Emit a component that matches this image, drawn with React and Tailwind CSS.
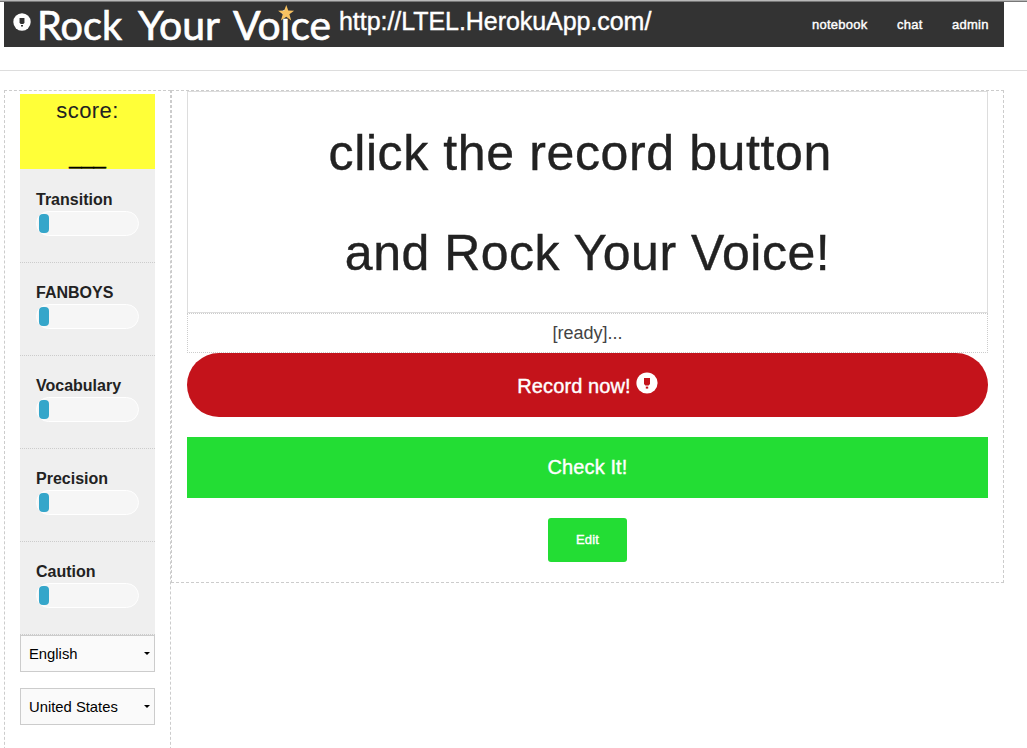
import React, { useState } from "react";

const NAV_LINKS = [
  { label: "notebook", className: "w-[56px]" },
  { label: "chat", className: "w-[26px]" },
  { label: "admin", className: "w-[37px]" },
];

const METERS = ["Transition", "FANBOYS", "Vocabulary", "Precision", "Caution"];

function RecordIcon({ className, hole }) {
  return (
    <svg viewBox="0 0 22 22" className={className}>
      <circle cx="11" cy="11" r="10.6" fill="#fff" />
      <path d="M8 6h6v6l-1.4 1.4H9.4L8 12z" fill={hole} />
      <path d="M9.8 14.6h2.4v2H9.8z" fill={hole} />
    </svg>
  );
}

function Logo() {
  return (
    <svg
      viewBox="0 -4 300 54"
      className="-mr-1 -mt-1 h-[54px] w-[300px] shrink-0"
      fontFamily="Lato, sans-serif"
      fontSize="41"
      fill="#fff"
      stroke="#fff"
      strokeWidth="0.7"
    >
      <text x="0" y="38.3" textLength="85" lengthAdjust="spacingAndGlyphs">Rock</text>
      <text x="101" y="38.3" textLength="82" lengthAdjust="spacingAndGlyphs">Your</text>
      <text x="196" y="38.3" textLength="98" lengthAdjust="spacingAndGlyphs">Voice</text>
      <path
        d="M249.3 3l1.9 5.6 5.9.1-4.7 3.6 1.8 6.2-4.9-3.7-5.4 3.7 1.9-6.2-4.7-3.5 6.1-.2z"
        fill="#f8c261"
        stroke="none"
      />
    </svg>
  );
}

function Header() {
  return (
    <header className="ml-1 flex h-[45px] w-[1000px] bg-[#333] text-white">
      <RecordIcon className="ml-[9px] mt-[11px] h-[18px] w-[18px] shrink-0" hole="#333" />
      <div className="ml-1.5 flex">
        <Logo />
      </div>
      <div className="ml-[6px] w-[312px] whitespace-nowrap text-[25px] leading-[39px] tracking-[-0.05px] [-webkit-text-stroke:0.4px_white]">
        http://LTEL.HerokuApp.com/
      </div>
      <nav className="ml-auto mr-[15px] flex gap-[29px] text-[13px] leading-[45px] tracking-[0.25px] [-webkit-text-stroke:0.4px_white]">
        {NAV_LINKS.map((link) => (
          <a key={link.label} href="#" className={`whitespace-nowrap ${link.className}`}>
            {link.label}
          </a>
        ))}
      </nav>
    </header>
  );
}

function Meter({ label }) {
  return (
    <div className="h-[93px] border-b border-dotted border-[#ccc] pl-4 pt-[20px]">
      <div className="h-[21px] text-[16px] font-bold leading-[19px]">{label}</div>
      <div className="h-[25px] w-[103px] rounded-full border border-white bg-[#f6f6f6] p-0.5">
        <div className="h-[19px] w-[10px] rounded-[4px] bg-[#35a6ca]" />
      </div>
    </div>
  );
}

function Select({ value, className = "" }) {
  return (
    <button
      className={`flex h-[37px] w-full items-center justify-between border border-[#ccc] bg-[#fafafa] pl-2 pr-1 text-left text-[14.8px] text-black ${className}`}
    >
      <span className="pt-0.5">{value}</span>
      <svg viewBox="0 0 6 3" className="h-[3px] w-[6px]">
        <path d="M0 0h6L3 3z" />
      </svg>
    </button>
  );
}

function Sidebar() {
  return (
    <aside className="h-[700px] w-[167px] border border-dashed border-[#ccc] px-[15px] pt-[3px]">
      <div className="h-[75px] bg-[#ffff38] text-center text-[22px]">
        <div className="h-[46px] leading-[33px] tracking-[0.4px]">score:</div>
        <div className="leading-[33px] text-black [-webkit-text-stroke:0.5px_black]">___</div>
      </div>
      <div className="bg-[#efefef] pt-px">
        {METERS.map((m) => (
          <Meter key={m} label={m} />
        ))}
      </div>
      <Select value="English" />
      <Select value="United States" className="mt-4" />
    </aside>
  );
}

export default function App() {
  const [status] = useState("[ready]...");

  return (
    <div className="h-[748px] w-[1027px] overflow-hidden bg-white font-['Liberation_Sans',Arial,sans-serif] text-[#222]">
      <div className="h-[2px] border-b border-[#777] bg-[#b8b8b8]" />
      <Header />
      <hr className="mt-[23px] border-[#ddd]" />
      <div className="ml-1 mt-[19px] flex items-start">
        <Sidebar />
        <main className="h-[493px] w-[833px] border border-dashed border-[#ccc] px-[15px]">
          <div className="h-[222px] whitespace-pre border border-[#ddd] pt-[11px] text-center text-[50px] leading-[100px] [-webkit-text-stroke:0.4px_#222]">
            <div className="tracking-[0.62px]">click the record button </div>
            <div className="tracking-[0.5px]">and Rock Your Voice!</div>
          </div>
          <div className="h-[40px] border border-dotted border-[#ccc] text-center text-[18px] leading-[38px] text-[#444]">
            {status}
          </div>
          <button className="flex h-[64px] w-full items-center justify-center rounded-full bg-[#c4131b] text-[20px] text-white [-webkit-text-stroke:0.4px_white]">
            <span className="pt-0.5 tracking-[0.1px]">Record now!</span>
            <RecordIcon className="mb-1 ml-[5px] h-[22px] w-[22px]" hole="#c4131b" />
          </button>
          <button className="mt-5 h-[61px] w-full bg-[#23dd34] pb-0.5 text-[20px] tracking-[0.1px] text-white [-webkit-text-stroke:0.4px_white]">
            Check It!
          </button>
          <button className="mx-auto mt-5 block h-[44px] w-[79px] rounded-[3px] bg-[#23dd34] text-[13px] tracking-[0.1px] text-white [-webkit-text-stroke:0.4px_white]">
            Edit
          </button>
        </main>
      </div>
    </div>
  );
}
